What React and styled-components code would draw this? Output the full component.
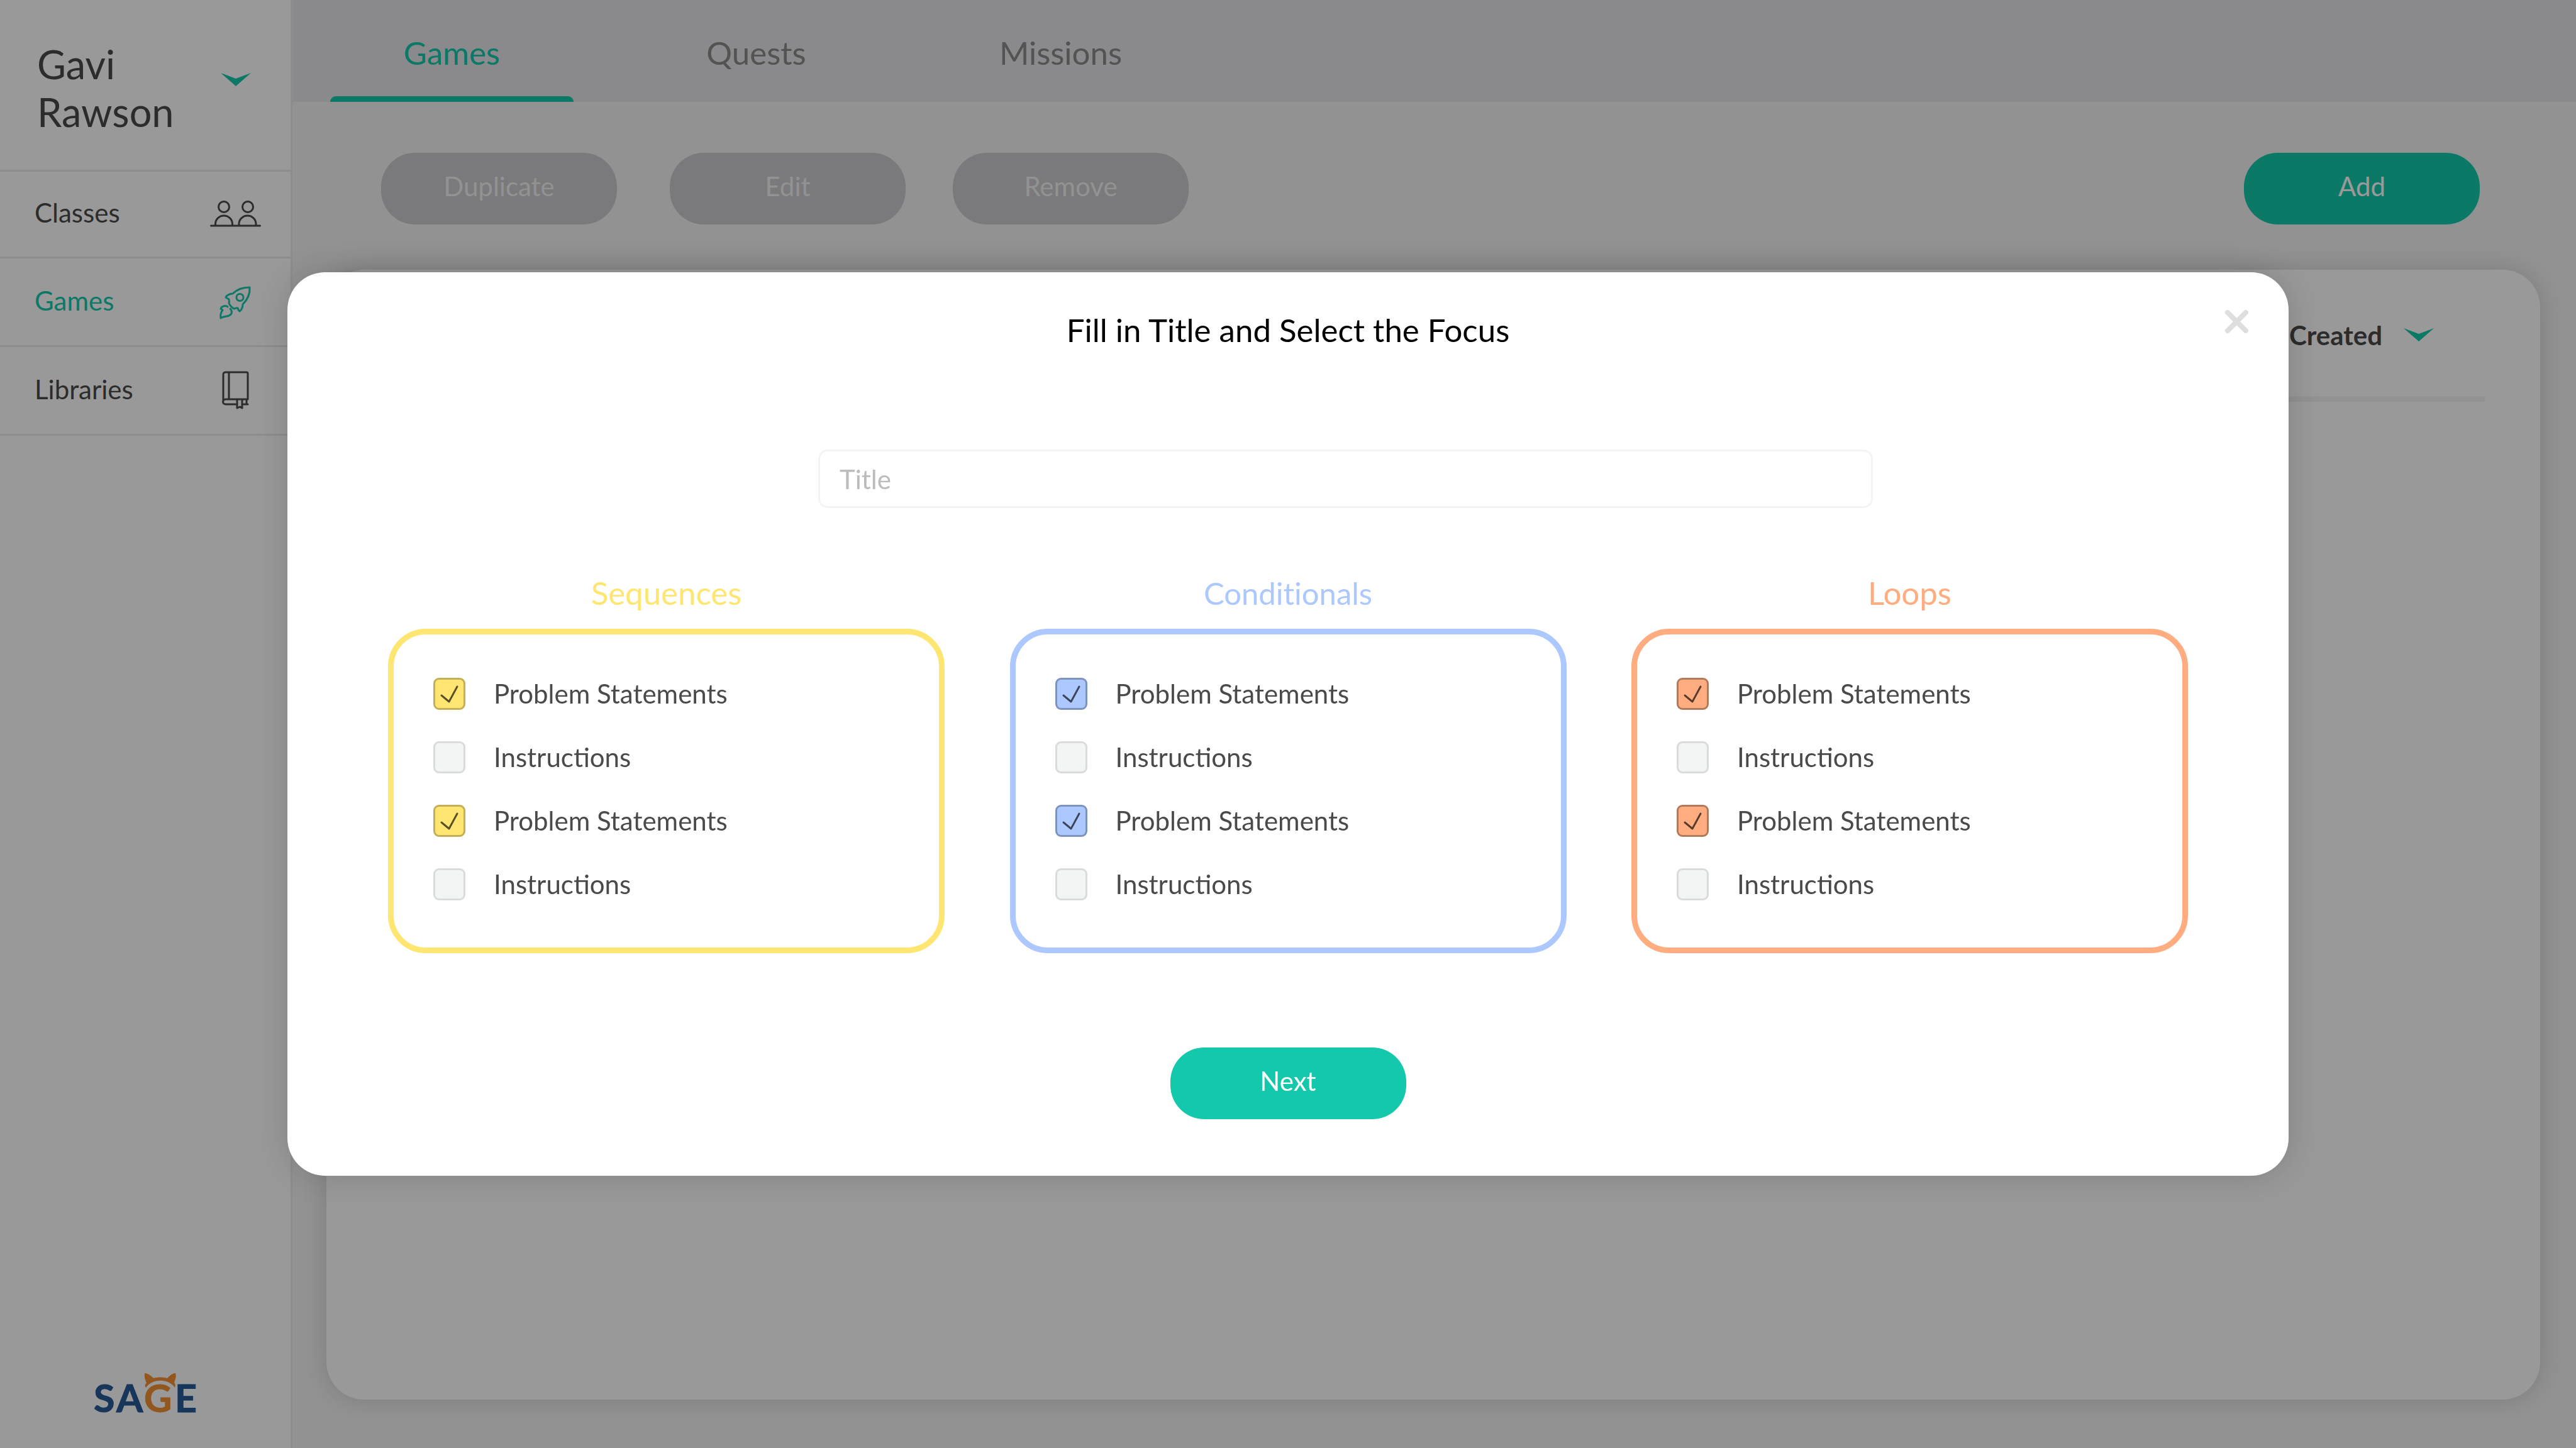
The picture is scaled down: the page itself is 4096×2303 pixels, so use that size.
import React from "react";
import styled, { createGlobalStyle } from "styled-components";

const GlobalStyle = createGlobalStyle`
  * { box-sizing: border-box; }
  html, body, #root { height: 100%; margin: 0; }
  body {
    font-family: Lato, "Open Sans", sans-serif;
    font-size: 42px;
    color: #4a4a4a;
    background: #f3f3f3;
    overflow: hidden;
  }
  button, input { font: inherit; }
`;

const green = "#14c8ab";

const Page = styled.div`
  display: flex;
  height: 100vh;
`;

const Sidebar = styled.aside`
  width: 465px;
  flex: none;
  display: flex;
  flex-direction: column;
  background: #fff;
  border-right: 3px solid #ebebeb;
`;

const Profile = styled.button`
  height: 273px;
  display: flex;
  align-items: flex-start;
  justify-content: space-between;
  padding: 64px 63px 0 59px;
  border: 0;
  border-bottom: 3px solid #ebebeb;
  background: none;
  color: inherit;
  text-align: left;
`;

const ProfileName = styled.span`
  width: 220px;
  font-size: 63px;
  line-height: 76px;
`;

const Chevron = styled.svg`
  width: 48px;
  height: 21px;
  fill: ${green};
`;

const ProfileChevron = styled(Chevron)`
  margin-top: 52px;
`;

const NavLink = styled.a`
  height: 141px;
  display: flex;
  align-items: center;
  justify-content: space-between;
  padding: 0 46px 0 55px;
  border-bottom: 3px solid #ebebeb;
  color: ${(p) => (p.$active ? green : "inherit")};
  text-decoration: none;
  line-height: 54px;

  &:first-child { height: 138px; }

  span { padding-bottom: 5px; }
`;

const NavIcon = styled.svg`
  width: 82px;
  height: 63px;
  overflow: visible;
  fill: none;
  stroke: currentColor;
  stroke-width: 3;
  stroke-linecap: round;
  stroke-linejoin: round;
`;

const Logo = styled.svg`
  width: 170px;
  height: 90px;
  margin: auto auto 30px 148px;
  font-size: 61px;
  font-weight: 700;
  overflow: visible;
`;

const Main = styled.main`
  flex: 1;
  min-width: 0;
  display: flex;
  flex-direction: column;
`;

const Tabs = styled.nav`
  height: 162px;
  flex: none;
  display: flex;
  gap: 97px;
  padding-left: 60px;
  background: #e6e6e9;
`;

const Tab = styled.button`
  width: 387px;
  display: flex;
  flex-direction: column;
  align-items: center;
  justify-content: space-between;
  padding: 54px 0 0;
  border: 0;
  background: none;
  color: ${(p) => (p.$active ? green : "#8a8a8a")};
  font-size: 51px;
  line-height: 60px;

  &::after {
    content: "";
    width: 100%;
    height: 9px;
    border-radius: 9px 9px 0 0;
    background: ${(p) => (p.$active ? green : "transparent")};
  }
`;

const Toolbar = styled.div`
  display: flex;
  align-items: center;
  gap: 75px;
  padding: 81px 153px 72px 141px;
`;

const PillButton = styled.button`
  width: 375px;
  height: 114px;
  padding: 0 0 8px;
  border: 0;
  border-radius: 54px;
  background: ${green};
  color: #fff;

  &:disabled {
    background: #cbcbcf;
    color: #f3f3f3;
  }

  ${Toolbar} > &:first-child { margin-right: 9px; }
  ${Toolbar} > &:last-child { margin-left: auto; }
`;

const Panel = styled.section`
  flex: 1;
  margin: 0 57px 77px 54px;
  padding: 0 88px;
  border-radius: 60px;
  background: #fff;
  box-shadow: 0 0 36px rgba(0, 30, 20, 0.16);
`;

const PanelHeader = styled.div`
  height: 210px;
  display: flex;
  align-items: center;
  justify-content: flex-end;
  padding: 6px 81px 0 0;
  border-bottom: 9px solid #f3f3f3;
`;

const SortButton = styled.button`
  display: flex;
  align-items: center;
  gap: 34px;
  padding: 0;
  border: 0;
  background: none;
  color: inherit;
  font-weight: 700;
`;

const Overlay = styled.div`
  position: fixed;
  inset: 0;
  display: flex;
  align-items: center;
  justify-content: center;
  background: rgba(0, 0, 0, 0.4);
`;

const Dialog = styled.form`
  position: relative;
  width: 3182px;
  max-width: 100%;
  display: flex;
  flex-direction: column;
  align-items: center;
  padding: 62px 160px 90px;
  border-radius: 60px;
  background: #fff;
  box-shadow: 0 0 60px rgba(0, 0, 0, 0.16);
`;

const DialogTitle = styled.h1`
  margin: 0 0 160px;
  color: #000;
  font-size: 51px;
  font-weight: 400;
  line-height: 60px;
`;

const CloseButton = styled.button`
  position: absolute;
  top: 60px;
  right: 64px;
  display: flex;
  padding: 0;
  border: 0;
  background: none;

  svg {
    width: 37px;
    height: 37px;
    stroke: #dedede;
    stroke-width: 8;
    stroke-linecap: round;
  }
`;

const TitleInput = styled.input`
  width: 1677px;
  height: 93px;
  margin-left: 183px;
  padding: 0 31px;
  border: 3px solid #f3f4f4;
  border-radius: 15px;
  background: #fff;
  color: #4a4a4a;
  outline: 0;

  &::placeholder { color: #bcbcbc; opacity: 1; }
`;

const FocusGroups = styled.div`
  width: 100%;
  display: flex;
  justify-content: space-between;
  margin: 105px 0 150px;
`;

const FocusGroup = styled.fieldset`
  min-width: 0;
  margin: 0;
  padding: 0;
  border: 0;
`;

const GroupTitle = styled.legend`
  width: 100%;
  padding: 0 0 27px;
  color: ${(p) => p.$color};
  font-size: ${(p) => (p.$compact ? 49 : 51)}px;
  font-variant-ligatures: none;
  line-height: 60px;
  text-align: center;
`;

const OptionList = styled.div`
  width: 885px;
  display: flex;
  flex-direction: column;
  gap: 50px;
  padding: 69px 63px 75px;
  border: 9px solid ${(p) => p.$color};
  border-radius: 60px;
`;

const Option = styled.label`
  height: 51px;
  display: flex;
  align-items: center;
  gap: 45px;
  line-height: 51px;
`;

const CheckFrame = styled.span`
  display: grid;

  > * { grid-area: 1 / 1; }

  svg {
    width: 51px;
    height: 51px;
    fill: none;
    stroke: rgba(0, 0, 0, 0.65);
    stroke-width: 3;
    stroke-linecap: round;
    stroke-linejoin: round;
    pointer-events: none;
    visibility: hidden;
  }

  input:checked + svg { visibility: visible; }
`;

const Checkbox = styled.input`
  appearance: none;
  width: 51px;
  height: 51px;
  margin: 0;
  border: 3px solid #dadbdb;
  border-radius: 9px;
  background: #f3f5f4;

  &:checked {
    border-color: ${(p) => p.$edge};
    background: ${(p) => p.$color};
  }
`;

function ChevronMark({ as: Component = Chevron }) {
  return (
    <Component viewBox="0 0 48 21" aria-hidden="true">
      <path d="M0 0 L24 9 L48 0 L24 21 Z" />
    </Component>
  );
}

function PeopleIcon() {
  return (
    <NavIcon viewBox="0 0 82 63" aria-hidden="true">
      <circle cx="22" cy="20" r="8.5" />
      <circle cx="60" cy="20" r="8.5" />
      <path d="M8.5 49V47a13.5 13 0 0 1 27 0V49" />
      <path d="M46 49V47a13.5 13 0 0 1 27 0V49" />
      <path d="M1.5 50H79.5" />
    </NavIcon>
  );
}

function RocketIcon() {
  return (
    <NavIcon viewBox="0 0 82 63" aria-hidden="true">
      <path d="M63 8C52 8 43 11 36 18C31 18 26 21 25 24L30 27C30 29 31 31 30 33C31 37 36 41 38 42C41 41 42 40 44 41C45 43 45 45 47 46C51 43 52 40 52 35C59 28 64 20 63 8Z" />
      <circle cx="47.5" cy="24" r="5.5" />
      <path d="M28 39C25 36 18 38 17 42C18 43 19 43 20 44C17 48 16 51 17 57C20 54 25 55 30 53C35 51 36 46 32 42" />
    </NavIcon>
  );
}

function BookIcon() {
  return (
    <NavIcon viewBox="0 0 82 63" aria-hidden="true">
      <path d="M60 45H25C19 45 19 53 25 53H41M53 53H60M58 46V53M21 48V6C21 3 22 2 25 2H58C60 2 60 3 60 4V45M30 3V44" />
      <path d="M43 46V59L47.5 57L51 59V46" />
    </NavIcon>
  );
}

function SageLogo() {
  return (
    <Logo viewBox="0 0 170 90" role="img" aria-label="Sage">
      <text y="63" fill="#285a96" stroke="#285a96">
        <tspan x="1">S</tspan>
        <tspan x="37">A</tspan>
        <tspan x="130">E</tspan>
      </text>
      <text x="81" y="63" fill="#f29132" stroke="#f29132">G</text>
      <path
        fill="#f29132"
        d="M82 1C87 1 92 5 96 9C103 7 111 7 118 9C122 5 126 1 131 1C133 7 130 12 129 16C131 18 131 21 130 24C120 9 94 9 84 24C82 21 82 19 85 17C83 12 81 7 82 1Z"
      />
    </Logo>
  );
}

const groups = [
  { name: "Sequences", color: "#ffe672", edge: "#c2af57" },
  { name: "Conditionals", color: "#adc8ff", edge: "#7f94bd", compact: true },
  { name: "Loops", color: "#ffad80", edge: "#b17a5c" },
];

const options = [
  { label: "Problem Statements", checked: true },
  { label: "Instructions", checked: false },
  { label: "Problem Statements", checked: true },
  { label: "Instructions", checked: false },
];

export default function App() {
  return (
    <>
      <GlobalStyle />
      <Page>
        <Sidebar>
          <Profile type="button">
            <ProfileName>Gavi Rawson</ProfileName>
            <ChevronMark as={ProfileChevron} />
          </Profile>
          <nav>
            <NavLink href="#classes"><span>Classes</span><PeopleIcon /></NavLink>
            <NavLink href="#games" $active><span>Games</span><RocketIcon /></NavLink>
            <NavLink href="#libraries"><span>Libraries</span><BookIcon /></NavLink>
          </nav>
          <SageLogo />
        </Sidebar>
        <Main>
          <Tabs>
            <Tab type="button" $active>Games</Tab>
            <Tab type="button">Quests</Tab>
            <Tab type="button">Missions</Tab>
          </Tabs>
          <Toolbar>
            <PillButton type="button" disabled>Duplicate</PillButton>
            <PillButton type="button" disabled>Edit</PillButton>
            <PillButton type="button" disabled>Remove</PillButton>
            <PillButton type="button">Add</PillButton>
          </Toolbar>
          <Panel>
            <PanelHeader>
              <SortButton type="button">Created<ChevronMark /></SortButton>
            </PanelHeader>
          </Panel>
        </Main>
      </Page>
      <Overlay>
        <Dialog role="dialog" aria-modal="true" aria-labelledby="dialog-title">
          <DialogTitle id="dialog-title">Fill in Title and Select the Focus</DialogTitle>
          <CloseButton type="button" aria-label="Close">
            <svg viewBox="0 0 37 37"><path d="M4 4L33 33M33 4L4 33" /></svg>
          </CloseButton>
          <TitleInput type="text" placeholder="Title" aria-label="Title" />
          <FocusGroups>
            {groups.map((group) => (
              <FocusGroup key={group.name}>
                <GroupTitle $color={group.color} $compact={group.compact}>{group.name}</GroupTitle>
                <OptionList $color={group.color}>
                  {options.map((option, i) => (
                    <Option key={i}>
                      <CheckFrame>
                        <Checkbox
                          type="checkbox"
                          defaultChecked={option.checked}
                          $color={group.color}
                          $edge={group.edge}
                        />
                        <svg viewBox="0 0 51 51" aria-hidden="true"><path d="M13 28L25 38L38 14" /></svg>
                      </CheckFrame>
                      {option.label}
                    </Option>
                  ))}
                </OptionList>
              </FocusGroup>
            ))}
          </FocusGroups>
          <PillButton type="submit">Next</PillButton>
        </Dialog>
      </Overlay>
    </>
  );
}
